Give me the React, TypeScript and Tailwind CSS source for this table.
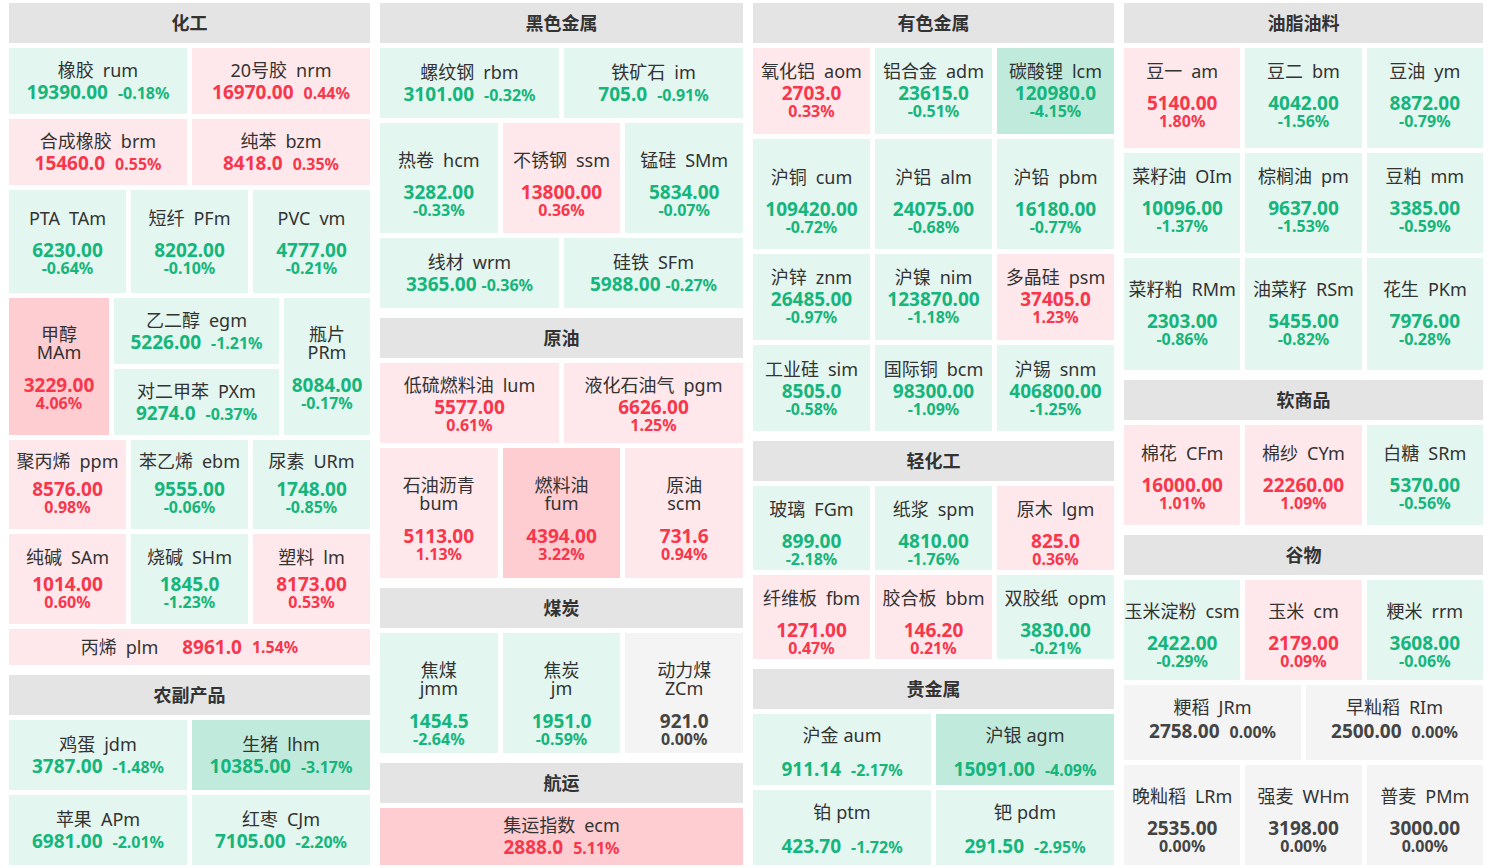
import React from "react";

type K = "i" | "s" | "t" | "l";
type T = {
  n: string;
  c: string;
  p: string;
  q: string;
  k: K;
  g?: 0 | 2 | 7 | 8 | 12 | 15;
  sp?: boolean;
  pp?: boolean;
};

const GAP: Record<number, string> = {
  0: "h-0",
  2: "h-[2px]",
  7: "h-[7px]",
  8: "h-[8px]",
  12: "h-[12px]",
  15: "h-[15px]",
};

function tone(q: string) {
  const v = parseFloat(q);
  if (v === 0) return { bg: "bg-[#f4f4f4]", fg: "text-[#444444]" };
  if (v < 0)
    return {
      bg: v <= -3 ? "bg-[#c0eadb]" : "bg-[#e3f6ef]",
      fg: "text-[#15b57c]",
    };
  return {
    bg: v >= 3 ? "bg-[#fdcdd1]" : "bg-[#ffe8eb]",
    fg: "text-[#f8364c]",
  };
}

function Cell({ t, cls = "flex-1" }: { t: T; cls?: string }) {
  const { bg, fg } = tone(t.q);
  const codeMl = t.sp ? "ml-[5px]" : "ml-[9px]";
  if (t.k === "l") {
    return (
      <div className={`${bg} ${cls} flex items-center justify-center whitespace-nowrap`}>
        <span className="text-[18px] leading-[22px] text-[#333333]">
          {t.n}
          <span className="ml-[9px]">{t.c}</span>
        </span>
        <span className={`${fg} ml-[24px] text-[19px] leading-[22px] font-bold`}>{t.p}</span>
        <span className={`${fg} ml-[10px] text-[16px] leading-[22px] font-bold`}>{t.q}</span>
      </div>
    );
  }
  const g = GAP[t.g ?? (t.k === "t" ? 15 : 0)];
  return (
    <div className={`${bg} ${cls} flex flex-col items-center justify-center text-center overflow-hidden whitespace-nowrap`}>
      {t.k === "t" ? (
        <div className="text-[18px] leading-[18px] text-[#333333]">
          <div>{t.n}</div>
          <div>{t.c}</div>
        </div>
      ) : (
        <div className="text-[18px] leading-[22px] text-[#333333]">
          {t.n}
          <span className={codeMl}>{t.c}</span>
        </div>
      )}
      <div className={g} />
      {t.k === "i" ? (
        <div className={`${fg} flex items-baseline justify-center font-bold leading-[22px]`}>
          <span className="text-[19px]">{t.p}</span>
          <span className={`${t.pp ? "ml-[5px]" : "ml-[10px]"} text-[16px]`}>{t.q}</span>
        </div>
      ) : (
        <>
          <div className={`${fg} text-[19px] leading-[19px] font-bold`}>{t.p}</div>
          <div className={`${fg} text-[16px] leading-[16px] font-bold`}>{t.q}</div>
        </>
      )}
    </div>
  );
}

function Header({ children }: { children: React.ReactNode }) {
  return (
    <div className="h-[40px] bg-[#e4e4e4] flex items-center justify-center text-[18px] font-bold text-[#333333]">
      {children}
    </div>
  );
}

function Row({ h, items, pad = "" }: { h: string; items: T[]; pad?: string }) {
  return (
    <div className={`flex gap-[5px] ${h}`}>
      {items.map((t) => (
        <Cell key={t.n} t={t} cls={`flex-1 ${pad}`} />
      ))}
    </div>
  );
}

function Section({ title, children }: { title: string; children: React.ReactNode }) {
  return (
    <div className="flex flex-col gap-[5px]">
      <Header>{title}</Header>
      {children}
    </div>
  );
}

const s = (n: string, c: string, p: string, q: string, g: 2 | 7 | 8 | 12 = 12): T => ({ n, c, p, q, k: "s", g });
const i = (n: string, c: string, p: string, q: string, extra: Partial<T> = {}): T => ({ n, c, p, q, k: "i", g: 0, ...extra });
const t2 = (n: string, c: string, p: string, q: string): T => ({ n, c, p, q, k: "t" });

export default function App() {
  return (
    <div className="w-[1488px] h-[868px] overflow-hidden bg-white flex gap-[10px] pl-[9px] pt-[3px] font-['Noto_Sans','Noto_Sans_CJK_SC',sans-serif]">
      {/* Column 1 */}
      <div className="w-[361px] flex flex-col gap-[10px]">
        <Section title="化工">
          <Row h="h-[66px]" items={[i("橡胶", "rum", "19390.00", "-0.18%"), i("20号胶", "nrm", "16970.00", "0.44%")]} />
          <Row h="h-[66px]" items={[i("合成橡胶", "brm", "15460.0", "0.55%"), i("纯苯", "bzm", "8418.0", "0.35%")]} />
          <Row
            h="h-[103px]"
            items={[s("PTA", "TAm", "6230.00", "-0.64%"), s("短纤", "PFm", "8202.00", "-0.10%"), s("PVC", "vm", "4777.00", "-0.21%")]}
          />
          <div className="flex gap-[5px] h-[137px]">
            <Cell t={t2("甲醇", "MAm", "3229.00", "4.06%")} cls="w-[100px] pt-[3px]" />
            <div className="w-[165px] flex flex-col gap-[5px]">
              <Cell t={i("乙二醇", "egm", "5226.00", "-1.21%")} cls="h-[66px]" />
              <Cell t={i("对二甲苯", "PXm", "9274.0", "-0.37%")} cls="h-[66px]" />
            </div>
            <Cell t={t2("瓶片", "PRm", "8084.00", "-0.17%")} cls="w-[86px] pt-[3px]" />
          </div>
          <Row
            h="h-[89px]"
            pad="pb-[4px]"
            items={[s("聚丙烯", "ppm", "8576.00", "0.98%", 8), s("苯乙烯", "ebm", "9555.00", "-0.06%", 8), s("尿素", "URm", "1748.00", "-0.85%", 8)]}
          />
          <Row
            h="h-[90px]"
            pad="pb-[2px]"
            items={[s("纯碱", "SAm", "1014.00", "0.60%", 7), s("烧碱", "SHm", "1845.0", "-1.23%", 7), s("塑料", "lm", "8173.00", "0.53%", 7)]}
          />
          <Row h="h-[36px]" items={[{ n: "丙烯", c: "plm", p: "8961.0", q: "1.54%", k: "l" }]} />
        </Section>
        <Section title="农副产品">
          <Row h="h-[70px]" items={[i("鸡蛋", "jdm", "3787.00", "-1.48%"), i("生猪", "lhm", "10385.00", "-3.17%")]} />
          <Row h="h-[70px]" items={[i("苹果", "APm", "6981.00", "-2.01%"), i("红枣", "CJm", "7105.00", "-2.20%")]} />
        </Section>
      </div>

      {/* Column 2 */}
      <div className="w-[363px] flex flex-col gap-[10px]">
        <Section title="黑色金属">
          <Row h="h-[70px]" items={[i("螺纹钢", "rbm", "3101.00", "-0.32%"), i("铁矿石", "im", "705.0", "-0.91%")]} />
          <Row
            h="h-[110px]"
            pad="pt-[10px]"
            items={[s("热卷", "hcm", "3282.00", "-0.33%"), s("不锈钢", "ssm", "13800.00", "0.36%"), s("锰硅", "SMm", "5834.00", "-0.07%")]}
          />
          <Row
            h="h-[70px]"
            items={[i("线材", "wrm", "3365.00", "-0.36%", { pp: true }), i("硅铁", "SFm", "5988.00", "-0.27%", { pp: true })]}
          />
        </Section>
        <Section title="原油">
          <Row h="h-[80px]" items={[s("低硫燃料油", "lum", "5577.00", "0.61%", 2), s("液化石油气", "pgm", "6626.00", "1.25%", 2)]} />
          <Row
            h="h-[130px]"
            pad="pt-[12px]"
            items={[t2("石油沥青", "bum", "5113.00", "1.13%"), t2("燃料油", "fum", "4394.00", "3.22%"), t2("原油", "scm", "731.6", "0.94%")]}
          />
        </Section>
        <Section title="煤炭">
          <Row
            h="h-[120px]"
            pad="pt-[22px]"
            items={[t2("焦煤", "jmm", "1454.5", "-2.64%"), t2("焦炭", "jm", "1951.0", "-0.59%"), t2("动力煤", "ZCm", "921.0", "0.00%")]}
          />
        </Section>
        <Section title="航运">
          <Row h="h-[57px]" items={[i("集运指数", "ecm", "2888.0", "5.11%")]} />
        </Section>
      </div>

      {/* Column 3 */}
      <div className="w-[361px] flex flex-col gap-[10px]">
        <Section title="有色金属">
          <Row
            h="h-[86px]"
            pad="pb-[4px]"
            items={[s("氧化铝", "aom", "2703.0", "0.33%", 2), s("铝合金", "adm", "23615.0", "-0.51%", 2), s("碳酸锂", "lcm", "120980.0", "-4.15%", 2)]}
          />
          <Row
            h="h-[110px]"
            pad="pt-[12px]"
            items={[s("沪铜", "cum", "109420.00", "-0.72%"), s("沪铝", "alm", "24075.00", "-0.68%"), s("沪铅", "pbm", "16180.00", "-0.77%")]}
          />
          <Row
            h="h-[86px]"
            pad="pb-[4px]"
            items={[s("沪锌", "znm", "26485.00", "-0.97%", 2), s("沪镍", "nim", "123870.00", "-1.18%", 2), s("多晶硅", "psm", "37405.0", "1.23%", 2)]}
          />
          <Row
            h="h-[86px]"
            pad="pb-[2px]"
            items={[s("工业硅", "sim", "8505.0", "-0.58%", 2), s("国际铜", "bcm", "98300.00", "-1.09%", 2), s("沪锡", "snm", "406800.00", "-1.25%", 2)]}
          />
        </Section>
        <Section title="轻化工">
          <Row
            h="h-[84px]"
            pad="pt-[8px]"
            items={[s("玻璃", "FGm", "899.00", "-2.18%"), s("纸浆", "spm", "4810.00", "-1.76%"), s("原木", "lgm", "825.0", "0.36%")]}
          />
          <Row
            h="h-[84px]"
            pad="pt-[8px]"
            items={[s("纤维板", "fbm", "1271.00", "0.47%"), s("胶合板", "bbm", "146.20", "0.21%"), s("双胶纸", "opm", "3830.00", "-0.21%")]}
          />
        </Section>
        <Section title="贵金属">
          <Row
            h="h-[71px]"
            pad="pt-[6px]"
            items={[i("沪金", "aum", "911.14", "-2.17%", { g: 12, sp: true }), i("沪银", "agm", "15091.00", "-4.09%", { g: 12, sp: true })]}
          />
          <Row
            h="h-[75px]"
            pad="pt-[4px]"
            items={[i("铂", "ptm", "423.70", "-1.72%", { g: 12, sp: true }), i("钯", "pdm", "291.50", "-2.95%", { g: 12, sp: true })]}
          />
        </Section>
      </div>

      {/* Column 4 */}
      <div className="w-[359px] flex flex-col gap-[10px]">
        <Section title="油脂油料">
          <Row
            h="h-[100px]"
            pad="pb-[8px]"
            items={[s("豆一", "am", "5140.00", "1.80%"), s("豆二", "bm", "4042.00", "-1.56%"), s("豆油", "ym", "8872.00", "-0.79%")]}
          />
          <Row
            h="h-[100px]"
            pad="pb-[8px]"
            items={[s("菜籽油", "OIm", "10096.00", "-1.37%"), s("棕榈油", "pm", "9637.00", "-1.53%"), s("豆粕", "mm", "3385.00", "-0.59%")]}
          />
          <Row
            h="h-[112px]"
            pad="pb-[4px]"
            items={[s("菜籽粕", "RMm", "2303.00", "-0.86%"), s("油菜籽", "RSm", "5455.00", "-0.82%"), s("花生", "PKm", "7976.00", "-0.28%")]}
          />
        </Section>
        <Section title="软商品">
          <Row
            h="h-[100px]"
            pad="pt-[2px]"
            items={[s("棉花", "CFm", "16000.00", "1.01%"), s("棉纱", "CYm", "22260.00", "1.09%"), s("白糖", "SRm", "5370.00", "-0.56%")]}
          />
        </Section>
        <Section title="谷物">
          <Row
            h="h-[100px]"
            pad="pt-[8px]"
            items={[s("玉米淀粉", "csm", "2422.00", "-0.29%"), s("玉米", "cm", "2179.00", "0.09%"), s("粳米", "rrm", "3608.00", "-0.06%")]}
          />
          <Row
            h="h-[75px]"
            pad="pb-[6px]"
            items={[i("粳稻", "JRm", "2758.00", "0.00%", { g: 2 }), i("早籼稻", "RIm", "2500.00", "0.00%", { g: 2 })]}
          />
          <Row
            h="h-[100px]"
            pad="pt-[8px]"
            items={[s("晚籼稻", "LRm", "2535.00", "0.00%"), s("强麦", "WHm", "3198.00", "0.00%"), s("普麦", "PMm", "3000.00", "0.00%")]}
          />
        </Section>
      </div>
    </div>
  );
}
